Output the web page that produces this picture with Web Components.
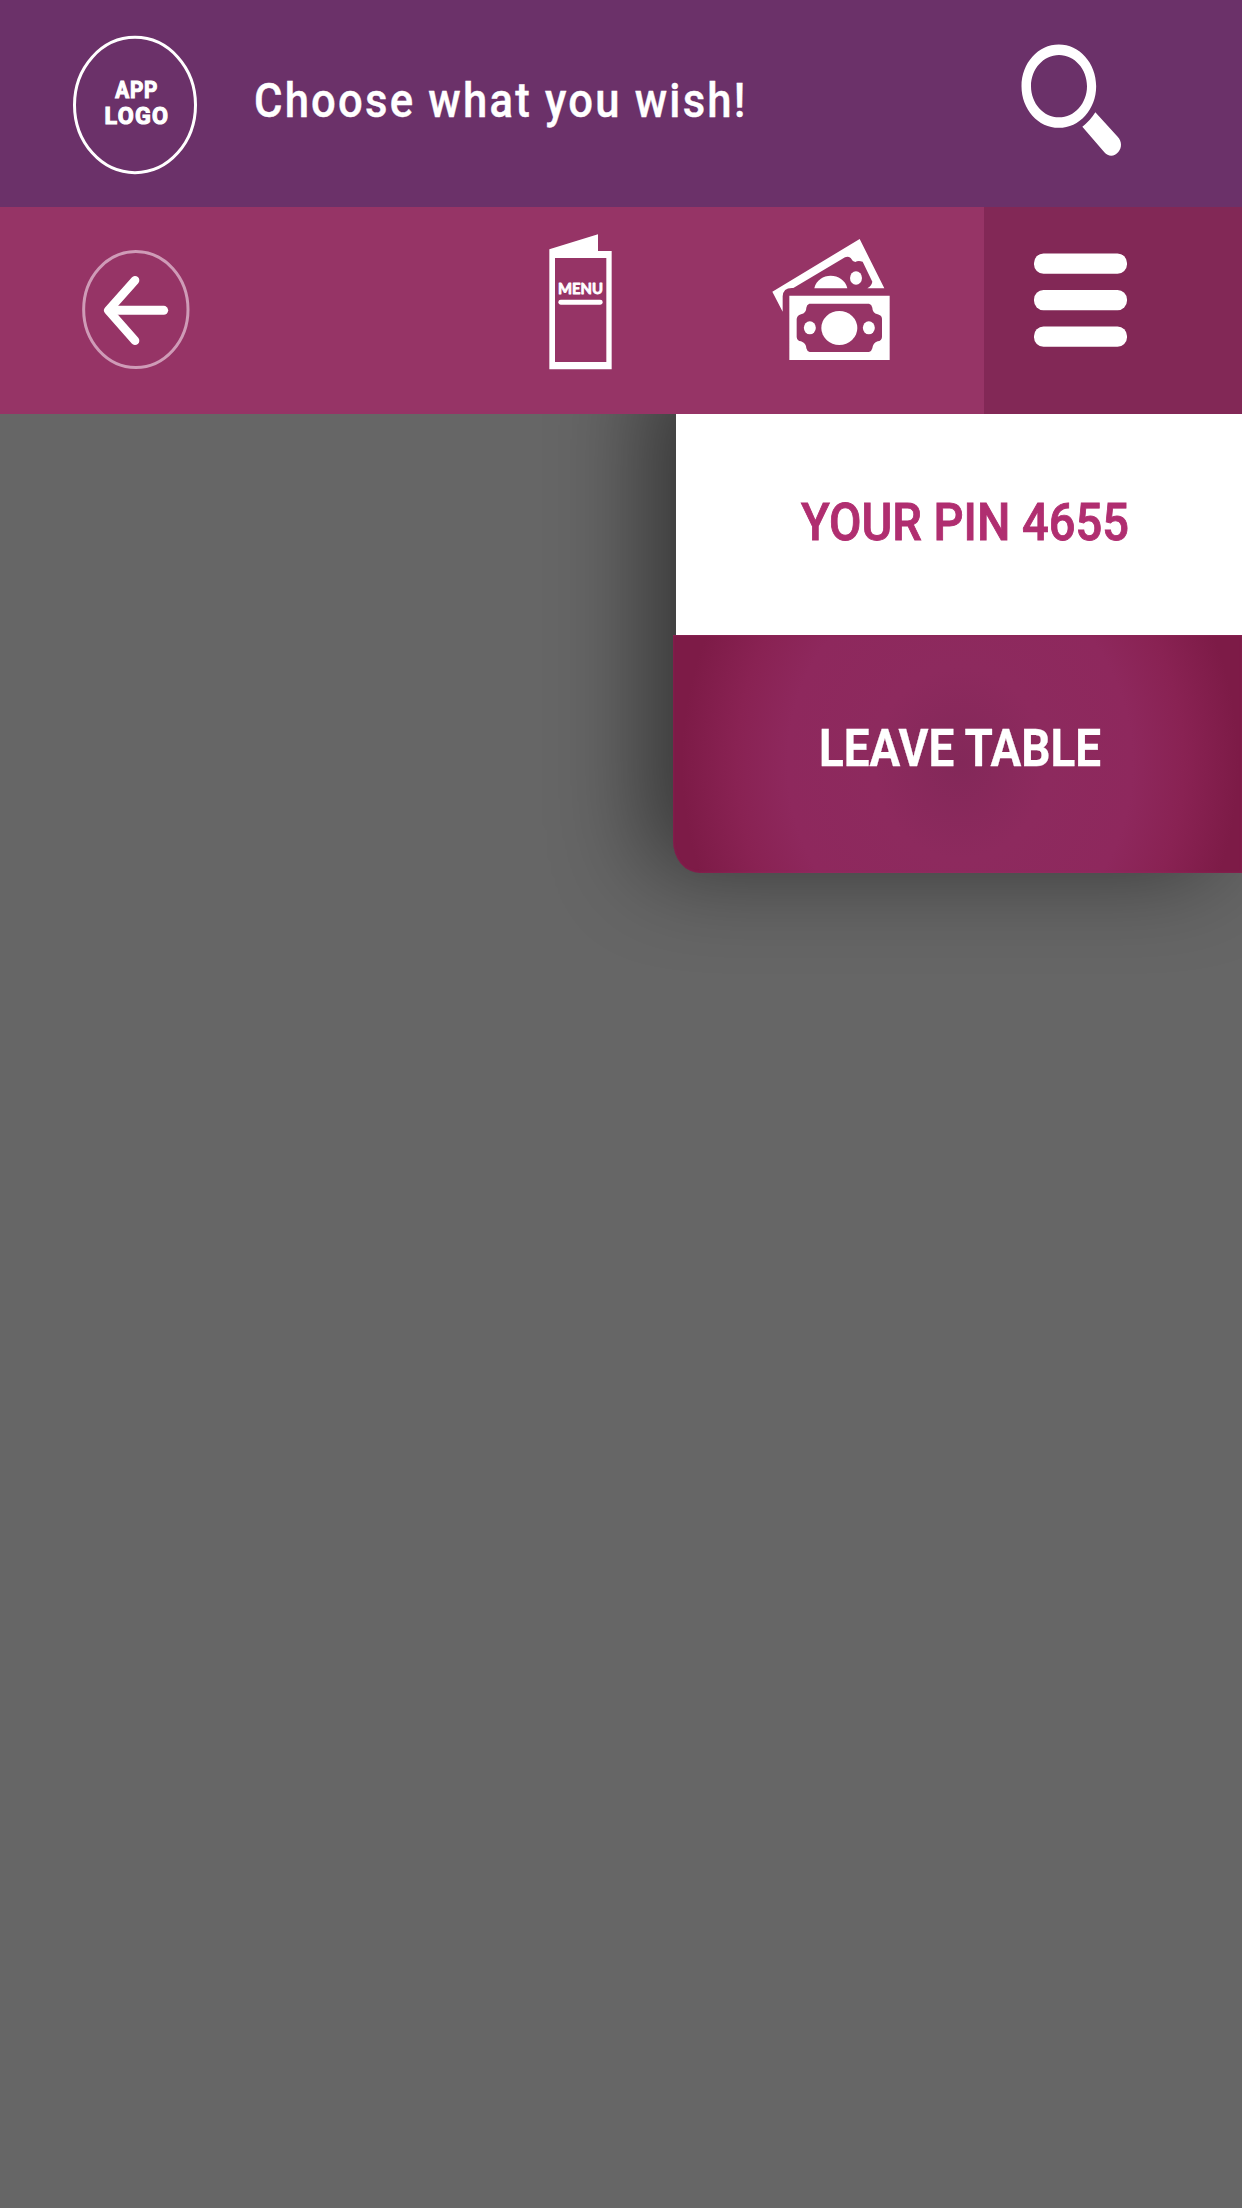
<!DOCTYPE html>
<html lang="en">
<head>
<meta charset="utf-8">
<title>Table menu</title>
<style>
html,body{margin:0;height:100%;background:#666;overflow:hidden}
body{font-family:Roboto,"Liberation Sans",sans-serif}
</style>
</head>
<body>
<table-app></table-app>
<script>
const define = (name, html) => customElements.define(name, class extends HTMLElement {
  constructor() {
    super();
    const t = document.createElement('template');
    t.innerHTML = '<style>:host{display:block;box-sizing:border-box}svg{display:block;flex:none;overflow:visible}</style>' + html;
    this.attachShadow({mode: 'open'}).append(t.content.cloneNode(true));
  }
});

define('app-logo', `
<svg width="150" height="170" viewBox="0 0 450 510" fill="#fff">
  <ellipse cx="225" cy="255" rx="181.5" ry="203" fill="none" stroke="#fff" stroke-width="9"/>
  <g font-family="Roboto" font-weight="700" font-size="74" stroke="#fff" stroke-width="3.500">
    <text transform="scale(.84 1)" x="197" y="235" textLength="151" lengthAdjust="spacing">APP</text>
    <text transform="scale(.94 1)" x="142" y="313.500" textLength="203" lengthAdjust="spacing">LOGO</text>
  </g>
</svg>`);

define('search-icon', `
<svg width="140" height="140" viewBox="0 0 420 420" fill="#fff">
  <path fill-rule="evenodd" d="M176.500 43.500c62 0 112 56 112 125s-50 125-112 125s-112-56-112-125s50-125 112-125zM177 75c-46.500 0-84 42-84 93.500s37.500 93.500 84 93.500s84-42 84-93.500s-37.500-93.500-84-93.500z"/>
  <path d="M286 247L353 320C366 334 366 352 355 366C344 380 325 381 313 367L247 290Q270 273 286 247z"/>
</svg>`);

define('app-header', `
<style>
:host{height:207px;background:#6b3169;display:flex;align-items:flex-start}
app-logo{margin:20px 0 0 60px}
.title{margin:60px 0 0 30px}
search-icon{margin:30px 102px 0 auto}
</style>
<app-logo></app-logo>
<svg class="title" width="520" height="90" fill="#fff" stroke="#fff" stroke-width=".4"><text transform="scale(.9 1)" x="15.500" y="57" font-family="Roboto" font-weight="500" font-size="48.500" textLength="546" lengthAdjust="spacing">Choose what you wish!</text></svg>
<search-icon></search-icon>`);

define('back-icon', `
<svg width="150" height="160" viewBox="0 0 450 480" fill="none">
  <ellipse cx="227.500" cy="238.500" rx="156.500" ry="174" stroke="#cf9bb7" stroke-width="9"/>
  <path d="M311 241H150" stroke="#fff" stroke-width="27" stroke-linecap="round"/>
  <path d="M225 151L145 241L225 332" stroke="#fff" stroke-width="26" stroke-linecap="round" stroke-linejoin="round"/>
</svg>`);

define('menu-icon', `
<svg width="100" height="170" viewBox="0 0 300 510" fill="#fff">
  <path fill-rule="evenodd" d="M58 88L204 43V93H245V448H58zM75 114V426H229V114z"/>
  <text x="84" y="221" font-family="Lato" font-weight="700" font-size="46" stroke="#fff" stroke-width="2.500" stroke-linejoin="round" textLength="135" lengthAdjust="spacingAndGlyphs">MENU</text>
  <rect x="85" y="239" width="133" height="15" rx="7"/>
</svg>`);

define('bill-icon', `
<svg width="140" height="150" viewBox="0 0 420 450" fill="#fff">
  <path d="M299 42L373 190H322Q335 182 337 170L308 110Q294 106 286 111Q276 108 272 99Q264 93 255 97L100 189Q69 187 68 214V260L37 200z"/>
  <path d="M163 190C174 140 250 140 262 190z"/>
  <ellipse cx="288" cy="159" rx="18" ry="20"/>
  <path fill-rule="evenodd" d="M88 212H389V405H88zM148 236Q140 239 139 248Q139 264 123 268Q111 272 110 282V336Q111 348 123 349Q139 355 139 370Q141 379 149 381H327Q335 379 337 370Q339 354 353 349Q365 348 366 336V281Q365 271 353 268Q337 263 337 248Q335 238 327 236z"/>
  <ellipse cx="238" cy="309" rx="54" ry="51"/>
  <ellipse cx="149.500" cy="308.500" rx="18" ry="19.500"/>
  <ellipse cx="326.500" cy="308.500" rx="18" ry="19.500"/>
</svg>`);

define('menu-toggle', `
<style>:host{width:258px;height:207px;background:#822856;padding:46px 0 0 50px}</style>
<svg width="93" height="95" fill="#fff">
  <rect y=".400" width="93" height="20.300" rx="9.500"/>
  <rect y="37" width="93" height="20.300" rx="9.500"/>
  <rect y="73.500" width="93" height="20.300" rx="9.500"/>
</svg>`);

define('app-toolbar', `
<style>
:host{height:207px;background:#963466;display:flex;align-items:flex-start}
back-icon{margin:23px 0 0 60px}
menu-icon{margin:13px 0 0 320px}
bill-icon{margin:18px 0 0 130px}
menu-toggle{margin-left:auto}
</style>
<back-icon></back-icon><menu-icon></menu-icon><bill-icon></bill-icon><menu-toggle></menu-toggle>`);

define('table-drawer', `
<style>
:host{width:569px;margin-left:auto;position:relative;z-index:0}
:host::before{content:"";position:absolute;z-index:-1;inset:-50px 0 1px 3px;border-radius:0 0 0 27px;box-shadow:-30px -2px 95px rgba(0,0,0,.48)}
.pin{height:221px;margin-left:3px;background:#fff}
.leave{height:238px;border-radius:0 0 0 27px/0 0 0 32px;background:radial-gradient(ellipse 287px 319px at 287px 128px,#832859 0,#8d2a5e 30%,#8e285d 60%,#892253 78%,#7d1b47 97%);box-shadow:inset 0 1px 1px #8b245399,inset 0 0 3px #a0326866}
</style>
<div class="pin"><svg width="566" height="221"><text x="125" y="126" font-family="Roboto" font-weight="500" font-size="52" fill="#b02e70" stroke="#b02e70" stroke-width=".9" textLength="328" lengthAdjust="spacingAndGlyphs">YOUR PIN 4655</text></svg></div>
<div class="leave"><svg width="569" height="238"><text x="146" y="131" font-family="Roboto" font-weight="700" font-size="52" fill="#fff" stroke="#fff" stroke-width=".3" textLength="282" lengthAdjust="spacingAndGlyphs">LEAVE TABLE</text></svg></div>`);

define('table-app', `
<style>
:host{width:1242px;height:2208px;background:#666;overflow:hidden;display:flex;flex-direction:column}
app-header,app-toolbar{position:relative;z-index:2;flex:none}
</style>
<app-header></app-header><app-toolbar></app-toolbar><table-drawer></table-drawer>`);
</script>
</body>
</html>
